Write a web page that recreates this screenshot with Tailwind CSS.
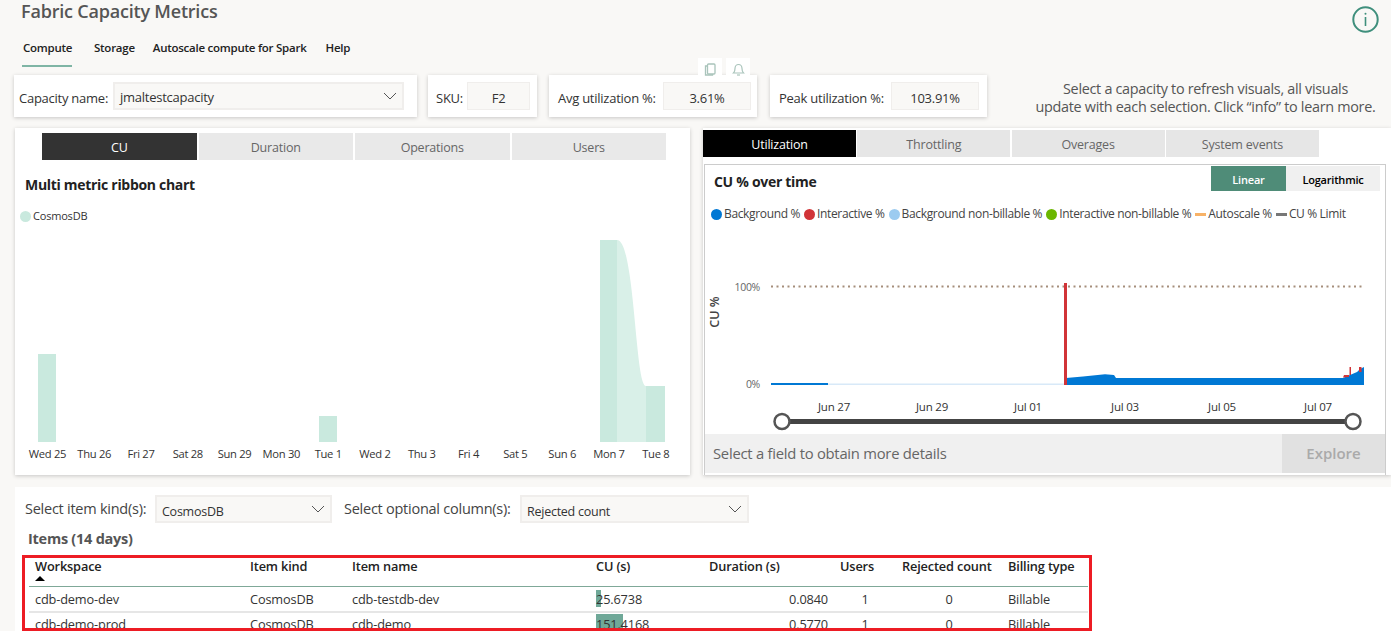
<!DOCTYPE html>
<html lang="en">
<head>
    <meta charset="UTF-8">
    <title>Fabric Capacity Metrics</title>
    <script src="https://cdn.jsdelivr.net/npm/@tailwindcss/browser@4"></script>
</head>
<body class="relative h-[631px] w-[1391px] overflow-hidden bg-[#f9f8f6] font-['Open_Sans',sans-serif] text-[#333]">
    <!-- header -->
    <header class="flex h-[39px] items-start justify-between pl-[21px] pr-[12px]">
        <h1 class="text-[18px] leading-[23px] font-semibold text-[#555] tracking-[-0.2px]">Fabric Capacity Metrics</h1>
        <svg class="mt-[6px]" width="27" height="27" viewBox="0 0 27 27" fill="none" stroke="#3f8f7c">
            <circle cx="13.5" cy="13.5" r="12.2" stroke-width="2"/>
            <path d="M13.5 11v9" stroke-width="1.6"/>
            <circle cx="13.5" cy="7.8" r="1" fill="#3f8f7c" stroke="none"/>
        </svg>
    </header>

    <nav class="flex h-[36px] pl-[22px] text-[11.5px] font-semibold leading-[18px] text-[#222] tracking-[-0.25px]">
        <a class="h-[28px] w-[50px] border-b-2 border-[#7fb5a5] pl-px">Compute</a>
        <a class="ml-[22px]">Storage</a>
        <a class="ml-[18px]">Autoscale compute for Spark</a>
        <a class="ml-[19px]">Help</a>
    </nav>

    <!-- filter cards -->
    <section class="flex h-[42px] items-stretch pl-[14px] text-[13px] tracking-[-0.25px]">
        <div class="flex w-[403px] items-center bg-white pl-[5px] shadow-[0_1px_4px_rgba(0,0,0,0.2)]">
            <span class="w-[94px] pt-[5px]">Capacity name:</span>
            <div class="flex h-[28px] w-[291px] items-center justify-between border-2 border-[#f0eeec] bg-[#f9f8f6] pl-[5px] pr-[5px]">
                <span class="pt-[4px]">jmaltestcapacity</span>
                <svg width="14" height="8" viewBox="0 0 14 8" fill="none" stroke="#555"><path d="M1 1l6 6 6-6"/></svg>
            </div>
        </div>
        <div class="ml-[11px] flex w-[109px] items-center bg-white pl-[8px] shadow-[0_1px_4px_rgba(0,0,0,0.2)]">
            <span class="w-[31px] pt-[5px]">SKU:</span>
            <div class="flex h-[28px] w-[63px] items-center justify-center border border-[#f0eeec] bg-[#f9f8f6] pt-[5px]">F2</div>
        </div>
        <div class="ml-[12px] flex w-[208px] items-center bg-white pl-[9px] shadow-[0_1px_4px_rgba(0,0,0,0.2)]">
            <span class="w-[105px] pt-[5px]">Avg utilization %:</span>
            <div class="flex h-[28px] w-[88px] items-center justify-center border border-[#f0eeec] bg-[#f9f8f6] pt-[5px]">3.61%</div>
        </div>
        <div class="ml-[13px] flex w-[217px] items-center bg-white pl-[9px] shadow-[0_1px_4px_rgba(0,0,0,0.2)]">
            <span class="w-[112px] pt-[5px]">Peak utilization %:</span>
            <div class="flex h-[28px] w-[88px] items-center justify-center border border-[#f0eeec] bg-[#f9f8f6] pt-[5px]">103.91%</div>
        </div>
        <p class="ml-[46px] w-[345px] whitespace-nowrap pt-[5px] text-center text-[14.4px] leading-[18px] text-[#555] tracking-[-0.3px]">Select a capacity to refresh visuals, all visuals<br>update with each selection. Click “info” to learn more.</p>
    </section>

    <!-- visual header icons -->
    <div class="absolute left-[698px] top-[58px] flex gap-[4px]">
        <div class="flex h-[18px] w-[24px] items-end justify-center bg-white">
            <svg width="12" height="13" viewBox="0 0 12 13" fill="none" stroke="#a9c4bb" stroke-width="1.3"><rect x="3.5" y="1" width="7.500" height="10" rx="1"/><path d="M3.500 3H1.500v9h7v-1"/></svg>
        </div>
        <div class="flex h-[18px] w-[24px] items-end justify-center bg-white">
            <svg width="13" height="13" viewBox="0 0 12 13" fill="none" stroke="#a9c4bb" stroke-width="1.2"><path d="M1 10c1-1 1.500-2 1.500-4.500 0-2.200 1.500-4 3.500-4s3.500 1.800 3.500 4c0 2.500.5 3.500 1.500 4.500z"/><path d="M4.500 12h3"/></svg>
        </div>
    </div>

    <!-- visuals -->
    <main class="mt-[11px] flex h-[359px] pl-[15px]">
        <section class="h-[347px] w-[675px] bg-white shadow-[0_1px_4px_rgba(0,0,0,0.2)]">
            <div class="flex gap-[2px] pl-[27px] pt-[5px] text-[12.5px] tracking-[-0.2px]">
                <div class="flex h-[27px] w-[154.5px] items-center justify-center bg-[#333] pt-[3px] text-white">CU</div>
                <div class="flex h-[27px] w-[154.5px] items-center justify-center bg-[#e9e9e9] pt-[3px] text-[#666]">Duration</div>
                <div class="flex h-[27px] w-[154.5px] items-center justify-center bg-[#e9e9e9] pt-[3px] text-[#666]">Operations</div>
                <div class="flex h-[27px] w-[154.5px] items-center justify-center bg-[#e9e9e9] pt-[3px] text-[#666]">Users</div>
            </div>
            <h2 class="mt-[15px] pl-[10px] text-[14px] leading-[20px] font-bold text-[#222] tracking-[-0.3px]">Multi metric ribbon chart</h2>
            <div class="mt-[13px] flex h-[16px] items-center pl-[5px] text-[11px] tracking-[-0.2px] text-[#333]">
                <span class="mr-[2px] h-[11px] w-[11px] rounded-full bg-[#c9e9de]"></span>CosmosDB
            </div>
            <svg class="mt-[16px] block" width="675" height="202" viewBox="0 0 675 202">
                <rect x="23" y="114" width="18" height="88" fill="#c9e9de"/>
                <rect x="304" y="176" width="18" height="26" fill="#c9e9de"/>
                <path d="M602 0C620 0 620 146 631 146V202H602z" fill="#d9f0e8"/>
                <rect x="585" y="0" width="17" height="202" fill="#c9e9de"/>
                <rect x="631" y="146" width="19" height="56" fill="#c9e9de"/>
            </svg>
            <div class="mt-[3px] grid grid-cols-[repeat(14,46.800px)] pl-[9px] text-center text-[11.2px] leading-[18px] tracking-[-0.3px] text-[#333]">
                <span>Wed 25</span><span>Thu 26</span><span>Fri 27</span><span>Sat 28</span><span>Sun 29</span><span>Mon 30</span><span>Tue 1</span><span>Wed 2</span><span>Thu 3</span><span>Fri 4</span><span>Sat 5</span><span>Sun 6</span><span>Mon 7</span><span>Tue 8</span>
            </div>
        </section>

        <section class="ml-[13px] h-[347px] w-[688px] bg-white shadow-[0_1px_4px_rgba(0,0,0,0.2)]">
            <div class="flex gap-[1.300px] pt-[2px] text-[12.5px] tracking-[-0.2px]">
                <div class="flex h-[27px] w-[153px] items-center justify-center bg-black pt-[3px] text-white">Utilization</div>
                <div class="flex h-[27px] w-[153px] items-center justify-center bg-[#e6e6e6] pt-[3px] text-[#666]">Throttling</div>
                <div class="flex h-[27px] w-[153px] items-center justify-center bg-[#e6e6e6] pt-[3px] text-[#666]">Overages</div>
                <div class="flex h-[27px] w-[153px] items-center justify-center bg-[#e6e6e6] pt-[3px] text-[#666]">System events</div>
            </div>
            <div class="ml-px mt-[7px] h-[311px] w-[682px] border-x border-t border-[#ccc]">
                <div class="flex items-start justify-between pr-[5px] pt-px">
                    <h2 class="pl-[9px] pt-[6px] text-[14px] leading-[20px] font-bold text-[#222] tracking-[-0.3px]">CU % over time</h2>
                    <div class="flex text-[11px] font-semibold tracking-[-0.2px]">
                        <div class="flex h-[25px] w-[75px] items-center justify-center bg-[#4f8c78] pt-[3px] text-white">Linear</div>
                        <div class="flex h-[25px] w-[94px] items-center justify-center bg-[#f0f0f0] pt-[3px] text-black">Logarithmic</div>
                    </div>
                </div>
                <div class="mt-[14px] flex h-[16px] items-center pl-[6px] text-[12px] tracking-[-0.35px] text-[#444]">
                    <span class="mr-[2px] h-[11px] w-[11px] rounded-full bg-[#0078d4]"></span><span class="mr-[4px]">Background %</span>
                    <span class="mr-[2px] h-[11px] w-[11px] rounded-full bg-[#d13438]"></span><span class="mr-[4px]">Interactive %</span>
                    <span class="mr-[2px] h-[11px] w-[11px] rounded-full bg-[#9ccbf0]"></span><span class="mr-[4px]">Background non-billable %</span>
                    <span class="mr-[2px] h-[11px] w-[11px] rounded-full bg-[#6bb700]"></span><span class="mr-[4px]">Interactive non-billable %</span>
                    <span class="mr-[2px] h-[3px] w-[11px] bg-[#f7b267]"></span><span class="mr-[4px]">Autoscale %</span>
                    <span class="mr-[2px] h-[3px] w-[11px] bg-[#777]"></span><span>CU % Limit</span>
                </div>
                <!-- svg origin sits at page x 705, y 240 -->
                <svg class="mt-[18px] block" width="680" height="194" viewBox="705 240 680 194" font-family="'Open Sans',sans-serif">
                    <text x="760" y="291" text-anchor="end" font-size="10.500" letter-spacing="-0.3" fill="#666">100%</text>
                    <text x="760" y="388" text-anchor="end" font-size="10.500" letter-spacing="-0.3" fill="#666">0%</text>
                    <text transform="translate(719 312) rotate(-90)" text-anchor="middle" font-size="12.500" font-weight="600" fill="#444">CU %</text>
                    <line x1="771" y1="286.500" x2="1363" y2="286.500" stroke="#a58e7b" stroke-width="2" stroke-dasharray="2 3.500"/>
                    <rect x="828" y="383.500" width="238" height="1.500" fill="#d8e9f8"/>
                    <path d="M771 385V383H828V385z" fill="#0078d4"/>
                    <path d="M1066 385V378L1083 376.500L1105 374.200L1114 375L1116 378H1343L1350 375L1357 372L1360 369L1364 367V385z" fill="#0078d4"/>
                    <rect x="1064" y="283" width="3" height="102" fill="#d13438"/>
                    <path d="M1343 377.500L1344 375H1349V377z" fill="#d13438"/>
                    <rect x="1349.500" y="367" width="1.500" height="8" fill="#d13438"/>
                    <rect x="1359" y="367" width="2.500" height="5" fill="#d13438"/>
                    <g font-size="11.500" fill="#333" text-anchor="middle" letter-spacing="-0.2">
                        <text x="834" y="411">Jun 27</text>
                        <text x="932" y="411">Jun 29</text>
                        <text x="1028" y="411">Jul 01</text>
                        <text x="1125" y="411">Jul 03</text>
                        <text x="1222" y="411">Jul 05</text>
                        <text x="1318" y="411">Jul 07</text>
                    </g>
                    <line x1="782" y1="421.500" x2="1353" y2="421.500" stroke="#444" stroke-width="5"/>
                    <circle cx="782" cy="421.500" r="7.500" fill="#fff" stroke="#555" stroke-width="2.500"/>
                    <circle cx="1353" cy="421.500" r="7.500" fill="#fff" stroke="#555" stroke-width="2.500"/>
                </svg>
                <div class="flex h-[39px]">
                    <div class="flex w-[577px] items-center bg-[#f0f0f0] pl-[8px] text-[14.8px] font-medium tracking-[-0.25px] text-[#666]">Select a field to obtain more details</div>
                    <div class="flex w-[103px] items-center justify-center bg-[#e1e1e1] text-[15px] font-semibold text-[#aaa]">Explore</div>
                </div>
            </div>
        </section>
    </main>

    <!-- items table -->
    <section class="ml-[15px] h-[144px] overflow-hidden bg-white pl-[7px]">
        <div class="flex h-[36px] items-start pt-[8px] text-[14.5px] tracking-[-0.25px]">
            <span class="ml-[3px] mt-[4px] w-[130px] leading-[20px] text-[#444]">Select item kind(s):</span>
            <div class="flex h-[28px] w-[177px] items-center justify-between border-2 border-[#f0eeec] bg-[#f9f8f6] pl-[5px] pr-[5px] text-[12.500px] text-[#333]">
                <span class="pt-[6px]">CosmosDB</span>
                <svg width="14" height="8" viewBox="0 0 14 8" fill="none" stroke="#555"><path d="M1 1l6 6 6-6"/></svg>
            </div>
            <span class="ml-[12px] mt-[4px] w-[176px] leading-[20px] text-[#444]">Select optional column(s):</span>
            <div class="flex h-[28px] w-[229px] items-center justify-between border-2 border-[#f0eeec] bg-[#f9f8f6] pl-[5px] pr-[5px] text-[12.500px] text-[#333]">
                <span class="pt-[6px]">Rejected count</span>
                <svg width="14" height="8" viewBox="0 0 14 8" fill="none" stroke="#555"><path d="M1 1l6 6 6-6"/></svg>
            </div>
        </div>
        <h3 class="ml-[6px] mt-[6px] text-[14.5px] leading-[20px] font-bold tracking-[-0.25px] text-[#555]">Items (14 days)</h3>
        <div class="mt-[6px] h-[76px] w-[1070px] overflow-hidden border-[3px] border-[#ed1c24] pl-[4px] text-[12.75px] tracking-[-0.15px] text-[#333]">
            <div class="grid h-[29px] w-[1059px] grid-cols-[215px_102px_244px_113px_131px_62px_106px_86px] border-b border-[#7fa898] font-semibold leading-[17px] text-[#222]">
                <div class="relative pl-[6px]">Workspace
                    <svg class="absolute left-[5.500px] top-[18px]" width="10" height="5" viewBox="0 0 10 5"><path d="M0 5L5 0l5 5z" fill="#000"/></svg>
                </div>
                <div class="pl-[6px]">Item kind</div>
                <div class="pl-[6px]">Item name</div>
                <div class="pl-[6px]">CU (s)</div>
                <div class="pl-[6px]">Duration (s)</div>
                <div class="pl-[6px]">Users</div>
                <div class="pl-[6px]">Rejected count</div>
                <div class="pl-[6px]">Billing type</div>
            </div>
            <div class="grid h-[26px] w-[1059px] grid-cols-[215px_102px_244px_113px_131px_62px_106px_86px] items-center border-b-2 border-[#e6e6e6] pt-[1px]">
                <div class="pl-[6px]">cdb-demo-dev</div>
                <div class="pl-[6px]">CosmosDB</div>
                <div class="pl-[6px]">cdb-testdb-dev</div>
                <div class="relative pl-[6px]"><span class="absolute left-[6px] top-[0px] h-[17px] w-[5px] bg-[#6fa898]"></span><span class="relative">25.6738</span></div>
                <div class="pr-[6px] text-right">0.0840</div>
                <div class="text-center">1</div>
                <div class="text-center">0</div>
                <div class="pl-[6px]">Billable</div>
            </div>
            <div class="grid h-[24px] w-[1059px] grid-cols-[215px_102px_244px_113px_131px_62px_106px_86px] items-center">
                <div class="pl-[6px]">cdb-demo-prod</div>
                <div class="pl-[6px]">CosmosDB</div>
                <div class="pl-[6px]">cdb-demo</div>
                <div class="relative pl-[6px]"><span class="absolute left-[6px] top-[-1px] h-[17px] w-[27px] bg-[#6fa898]"></span><span class="relative">151.4168</span></div>
                <div class="pr-[6px] text-right">0.5770</div>
                <div class="text-center">1</div>
                <div class="text-center">0</div>
                <div class="pl-[6px]">Billable</div>
            </div>
        </div>
    </section>
</body>
</html>
